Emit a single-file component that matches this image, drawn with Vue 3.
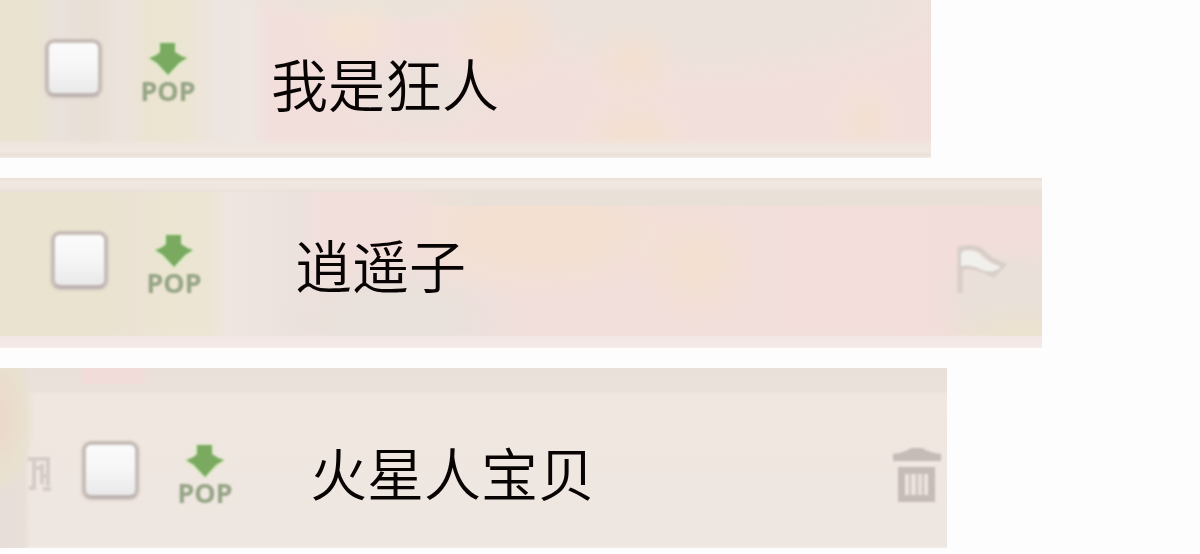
<script setup>
import { ref } from 'vue'

const rows = ref([
  { id: 'first', name: '我是狂人', checked: false },
  { id: 'second', name: '逍遥子', checked: false, action: 'flag' },
  { id: 'third', name: '火星人宝贝', checked: false, action: 'trash', fragment: true }
])
</script>

<template>
  <main class="list">
    <section v-for="row in rows" :key="row.id" class="row" :class="row.id">
      <svg v-if="row.fragment" class="fragment" viewBox="0 0 24 36" aria-hidden="true">
        <path d="M0 3H22M6 5V30M20 5V30M14 8V28M7 12H13M15 20H20M1 32H8M15 33H23" />
      </svg>
      <input :id="row.id" v-model="row.checked" class="check" type="checkbox" />
      <div class="pop">
        <svg class="arrow" viewBox="0 0 40 34" aria-hidden="true">
          <path class="glow" d="M11 1H27V13L38 16L20 33L1 16L11 13Z" />
          <path class="shape" d="M12 1H27V10Q32 14 39 16L31 21L20 33L9 21L1 16Q8 14 12 10Z" />
        </svg>
        <span class="pop-text">POP</span>
      </div>
      <label class="name" :for="row.id">{{ row.name }}</label>
      <button v-if="row.action === 'flag'" class="action" type="button" aria-label="flag">
        <svg class="flag" viewBox="0 0 54 50" aria-hidden="true">
          <path class="edge" d="M5 48V4Q18 0 27 6Q34 15 48 20L38 30Q30 25 22 23Q12 20 5 24" />
          <path class="cloth" d="M6 8Q14 3 23 8Q31 18 46 22Q38 29 27 25Q16 19 6 21Z" />
        </svg>
      </button>
      <button v-if="row.action === 'trash'" class="action" type="button" aria-label="trash">
        <svg class="trash" viewBox="0 0 50 58" aria-hidden="true">
          <path class="lid" d="M1 8Q12 7 19 2H30Q38 7 49 8V15H1Z" />
          <path class="can" fill-rule="evenodd" d="M6 21H43V56H6ZM13 28V49H36V28Z" />
          <path class="ribs" d="M18 28V49M25 28V49M31 28V49" />
        </svg>
      </button>
    </section>
  </main>
</template>

<style>
body {
  margin: 0;
  background: #fdfdfd;
}
</style>

<style scoped>
.list {
  display: flex;
  flex-direction: column;
  gap: 20px;
}

.row {
  display: flex;
  align-items: flex-start;
  box-sizing: border-box;
}

.first {
  width: 77.6%;
  min-height: 158px;
  padding: 39px 0 0 45px;
  background:
    linear-gradient(transparent 138px, #f0e6e0 146px, #f1e8e1 152px, #eadfd9 154px, #f3eae4 158px),
    radial-gradient(ellipse 60px 50px at 68% 88%, #f3e0d0 20%, transparent),
    radial-gradient(ellipse 60px 60px at 54% 22%, #f3e0d0 10%, transparent),
    radial-gradient(ellipse 50px 36px at 38% 20%, #f4e2d3 10%, transparent),
    radial-gradient(ellipse 50px 46px at 68% 40%, #f3e0d1 10%, transparent),
    radial-gradient(ellipse 40px 50px at 93% 78%, #f3e0d2 10%, transparent),
    radial-gradient(ellipse 280px 90px at 76% 0%, #ebe2dc 50%, transparent),
    radial-gradient(ellipse 150px 26px at 42% 0%, #ebe3da 50%, transparent),
    radial-gradient(ellipse 80px 50px at 45% 60%, #ebe2dc 30%, transparent),
    linear-gradient(90deg, #e9e3cf 0, #e9e3d1 4%, #e9e1dc 6%, #e8e0d4 10%, #ece3de 13%, #ebe4d1 16%, #ece5d3 20%, #ede5df 23%, #eee6e1 27%, #f2dfdc 29%, #f2dfdc 100%);
}

.second {
  width: 86.8%;
  min-height: 170px;
  padding: 53px 33px 0 51px;
  background:
    linear-gradient(#eadfd7 0, #f1e8e2 4px, #efe5df 11px, #eae1dc 13px, transparent 15px, transparent 157px, #f3e7e5 159px, #f3e9e7 168px, #f7efe9 170px),
    linear-gradient(90deg, transparent, #e9e1d8 12%, #e9e1d8) 100% 0 / 62% 28px no-repeat,
    radial-gradient(ellipse 90px 50px at 98% 100%, #ebe2d0 40%, transparent),
    radial-gradient(ellipse 80px 60px at 97% 72%, #e9e0da 50%, transparent),
    radial-gradient(ellipse 150px 74px at 52% 30%, #f3e0d1 40%, transparent),
    radial-gradient(ellipse 66px 70px at 67% 50%, #f3e0d1 20%, transparent),
    radial-gradient(ellipse 140px 70px at 38% 85%, #e9e1db 40%, transparent),
    linear-gradient(90deg, #e9e3cf 0, #e9e3d0 10%, #ebe2d4 13%, #ece5d2 16%, #ece5d4 20%, #efe6e2 22%, #ebe2dd 28%, #f2dfdc 31%, #f2dddb 100%);
}

.third {
  width: 78.9%;
  min-height: 180px;
  padding: 73px 5px 0 28px;
  background:
    linear-gradient(90deg, transparent 80px, #f1dcd9 82px, #f1dcd9 144px, transparent 146px) 0 0 / 100% 16px no-repeat,
    radial-gradient(ellipse 36px 80px at 0 28%, #ebdacb 20%, #e9e1cf 70%, transparent),
    linear-gradient(90deg, #e7ded9 0, #e8dfd9 24px, transparent 30px),
    linear-gradient(#e9e0da 0, #eae1db 23px, #f0e7e1 27px, #eee6e0 178px, #f3eeea 180px);
}

.check {
  appearance: none;
  flex: none;
  box-sizing: border-box;
  width: 57px;
  height: 58px;
  margin: 0 39px 0 0;
  border: 4px solid #c8bdb8;
  border-bottom-color: #bdb5b2;
  border-radius: 9px;
  background: linear-gradient(#fbfbfb, #f6f6f7 50%, #e9e9e9);
  box-shadow: 0 1px 3px #cfc4be;
  filter: blur(1px);
}

.check:checked {
  background: #8fb579;
}

.pop {
  display: flex;
  flex: none;
  flex-direction: column;
  align-items: center;
  width: 54px;
  padding-top: 3px;
  filter: blur(1px);
}

.arrow {
  width: 40px;
  height: 34px;
}

.glow {
  fill: #dcebc2;
  stroke: #e0ebc9;
  stroke-width: 3;
}

.shape {
  fill: #79aa60;
}

.pop-text {
  color: #96a585;
  font: 700 27px/30px "Noto Sans", "Open Sans", sans-serif;
}

.name {
  color: #080403;
  font: 350 57px/60px "Noto Sans CJK SC", sans-serif;
  white-space: nowrap;
}

.first .name {
  margin: 13px 0 0 76px;
}

.second .name {
  margin: 2px 0 0 94px;
}

.third .name {
  margin: 0 0 0 78px;
}

.fragment {
  flex: none;
  width: 24px;
  height: 36px;
  margin: 15px 30px 0 0;
  fill: none;
  stroke: #d6ccc7;
  stroke-width: 4;
  filter: blur(1px);
}

.action {
  display: block;
  flex: none;
  margin: 5px 0 0 auto;
  padding: 0;
  border: 0;
  background: none;
  filter: blur(1px);
}

.second .action {
  margin-top: 14px;
}

.action svg {
  display: block;
}

.flag {
  width: 54px;
  height: 50px;
}

.cloth {
  fill: #f1f0ec;
}

.edge {
  fill: none;
  stroke: #d8cec8;
  stroke-width: 5;
}

.trash {
  width: 50px;
  height: 58px;
}

.lid,
.can {
  fill: #c5bbb7;
}

.ribs {
  fill: none;
  stroke: #d0c6c1;
  stroke-width: 3;
}
</style>
